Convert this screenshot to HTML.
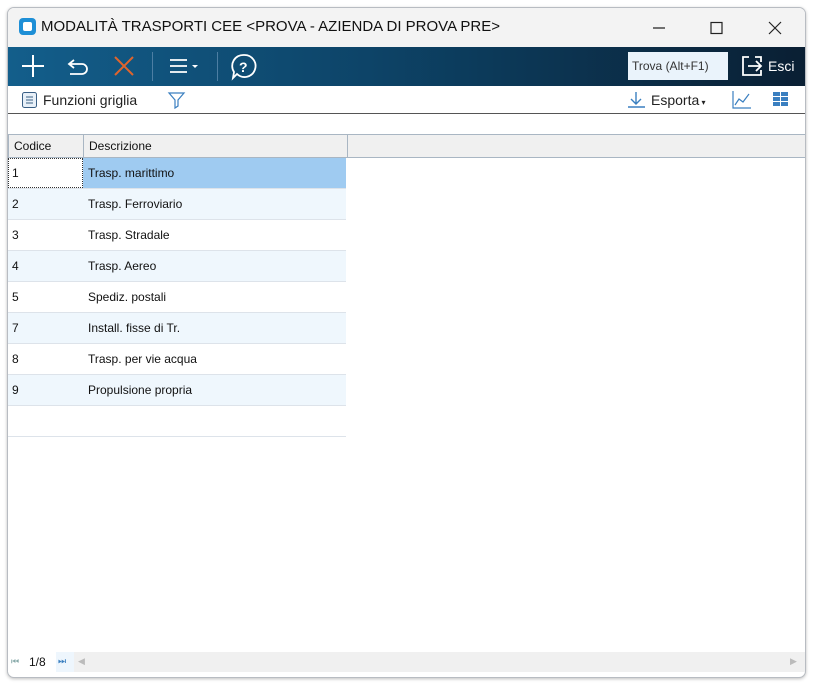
<!DOCTYPE html>
<html><head><meta charset="utf-8"><style>
*{margin:0;padding:0;box-sizing:border-box}
body{width:821px;height:696px;background:#fff;font-family:"Liberation Sans",sans-serif;position:relative;overflow:hidden}
.win{position:absolute;left:7px;top:7px;width:799px;height:671px;border:1px solid #b8bcc2;border-radius:7px;background:#fff;overflow:hidden;box-shadow:0 1px 3px rgba(0,0,0,.25)}
.title{position:absolute;left:0;top:0;width:100%;height:39px;background:#f3f3f3}
.title .t{position:absolute;left:33px;top:10px;font-size:15px;color:#111}
.logo{position:absolute;left:11px;top:10px;width:17px;height:17px;background:#1e8fd6;border-radius:4px}
.logo:after{content:"";position:absolute;left:4px;top:4px;width:9px;height:9px;background:#fff;border-radius:2px}
.tb{position:absolute;left:0;top:39px;width:100%;height:39px;background:linear-gradient(90deg,#135e8b 0%,#0d4468 45%,#0a1f33 100%)}
.sep{position:absolute;top:5px;width:1px;height:29px;background:#4d7ea3}
.find{position:absolute;left:620px;top:5px;width:100px;height:28px;background:#eaf3fb;font-size:12px;color:#333;padding:7px 4px}
.tb2{position:absolute;left:0;top:78px;width:100%;height:28px;border-bottom:1px solid #555;font-size:14px;color:#222}
.grid{position:absolute;left:0;top:126px;width:100%;}
.hdr{position:absolute;top:0;height:24px;background:#f0f0f0;border:1px solid #a9b6c3;font-size:12px;padding:4px 5px;color:#111}
.row{position:absolute;left:0;width:338px;height:31px;border-bottom:1px solid #dde3ea;font-size:12px;color:#111}
.row span{position:absolute;top:8px}
.foot{position:absolute;left:0;top:644px;width:100%;height:20px;background:#f0f0f0;font-size:12px}
</style></head><body>
<div class="win">
<div class="title"><div class="logo"></div><div class="t">MODALITÀ TRASPORTI CEE &lt;PROVA - AZIENDA DI PROVA PRE&gt;</div>
<svg style="position:absolute;left:640px;top:12px" width="150" height="16"><path d="M5 8h12" stroke="#222" stroke-width="1.2"/><rect x="63" y="2.5" width="11" height="11" fill="none" stroke="#222" stroke-width="1.2"/><path d="M121 2l12 12M133 2l-12 12" stroke="#222" stroke-width="1.2"/></svg></div>
<div class="tb">
<svg style="position:absolute;left:0;top:0" width="300" height="39">
<path d="M25 8v22M14 19h22" stroke="#fff" stroke-width="2"/>
<path d="M66 13l-5 4 5 4M61 17h13a5 5 0 0 1 0 10h-12" stroke="#fff" stroke-width="1.8" fill="none"/>
<path d="M107 10l18 18M125 10l-18 18" stroke="#e0642c" stroke-width="2"/>
<path d="M162 13h17M162 19h17M162 25h17" stroke="#fff" stroke-width="1.8"/><path d="M184 18h6l-3 3z" fill="#fff"/>
<path d="M236 8a11 11 0 1 1-7 19l-4 4 1-6a11 11 0 0 1 10-17z" stroke="#fff" stroke-width="1.8" fill="none"/>
<text x="231" y="25" fill="#fff" font-size="14" font-weight="bold" font-family="Liberation Sans">?</text>
</svg>
<div class="sep" style="left:144px"></div><div class="sep" style="left:209px"></div>
<div class="find">Trova (Alt+F1)</div>
<svg style="position:absolute;left:732px;top:7px" width="26" height="24"><path d="M9 3H3v18h18v-5M21 8V3h-6" stroke="#fff" stroke-width="1.8" fill="none"/><path d="M8 12h13M16 7l5 5-5 5" stroke="#fff" stroke-width="1.8" fill="none"/></svg>
<div style="position:absolute;left:760px;top:11px;color:#fff;font-size:14px">Esci</div>
</div>
<div class="tb2">
<svg style="position:absolute;left:13px;top:5px" width="18" height="18"><rect x="1.5" y="1.5" width="14" height="15" rx="2" fill="#e8f0f8" stroke="#3a5f85"/><path d="M5 6h7M5 9h7M5 12h7" stroke="#3a5f85"/></svg>
<div style="position:absolute;left:35px;top:6px">Funzioni griglia</div>
<svg style="position:absolute;left:159px;top:4px" width="20" height="20"><path d="M2 3h15l-6 7v6l-3 2v-8z" fill="none" stroke="#3a7fc0" stroke-width="1.2"/></svg>
<svg style="position:absolute;left:619px;top:5px" width="20" height="18"><path d="M9 1v12M4 8l5 5 5-5M1 16h17" stroke="#3a7fc0" stroke-width="1.4" fill="none"/></svg>
<div style="position:absolute;left:643px;top:6px">Esporta<span style="font-size:8px"> ▾</span></div>
<svg style="position:absolute;left:723px;top:4px" width="22" height="20"><path d="M2 1v17h18M4 15l4-6 4 3 6-8" stroke="#3a7fc0" stroke-width="1.2" fill="none"/></svg>
<svg style="position:absolute;left:765px;top:6px" width="16" height="16" fill="#3a7fc0"><rect x="0" y="0" width="7" height="4"/><rect x="8" y="0" width="7" height="4"/><rect x="0" y="5" width="7" height="4"/><rect x="8" y="5" width="7" height="4"/><rect x="0" y="10" width="7" height="4"/><rect x="8" y="10" width="7" height="4"/></svg>
</div>
<div class="grid">
<div class="hdr" style="left:0;width:76px">Codice</div>
<div class="hdr" style="left:75px;width:265px">Descrizione</div>
<div class="hdr" style="left:339px;width:460px"></div>
</div>
<div class="row" style="top:150px"><span style="left:4px">1</span><div style="position:absolute;left:75px;top:0;width:263px;height:30px;background:#9fcbf1"></div><span style="left:80px">Trasp. marittimo</span><div style="position:absolute;left:0;top:0;width:75px;height:30px;border:1px dotted #333"></div></div>
<div class="row" style="top:181px;background:#eff7fd"><span style="left:4px">2</span><span style="left:80px">Trasp. Ferroviario</span></div>
<div class="row" style="top:212px"><span style="left:4px">3</span><span style="left:80px">Trasp. Stradale</span></div>
<div class="row" style="top:243px;background:#eff7fd"><span style="left:4px">4</span><span style="left:80px">Trasp. Aereo</span></div>
<div class="row" style="top:274px"><span style="left:4px">5</span><span style="left:80px">Spediz. postali</span></div>
<div class="row" style="top:305px;background:#eff7fd"><span style="left:4px">7</span><span style="left:80px">Install. fisse di Tr.</span></div>
<div class="row" style="top:336px"><span style="left:4px">8</span><span style="left:80px">Trasp. per vie acqua</span></div>
<div class="row" style="top:367px;background:#eff7fd"><span style="left:4px">9</span><span style="left:80px">Propulsione propria</span></div>
<div class="row" style="top:398px"></div>
<div class="foot"><div style="position:absolute;left:0;top:0;width:66px;height:20px;background:#fff"></div><span style="position:absolute;left:3px;top:4px;font-size:9px;color:#8aa">⏮</span><span style="position:absolute;left:21px;top:3px;color:#111">1/8</span><div style="position:absolute;left:48px;top:0;width:18px;height:20px;background:#eef6fd"></div><span style="position:absolute;left:50px;top:4px;font-size:9px;color:#3a7fc0">⏭</span><span style="position:absolute;left:70px;top:4px;font-size:9px;color:#bbb">◀</span><span style="position:absolute;left:782px;top:4px;font-size:9px;color:#bbb">▶</span></div>
</div>
</body></html>
